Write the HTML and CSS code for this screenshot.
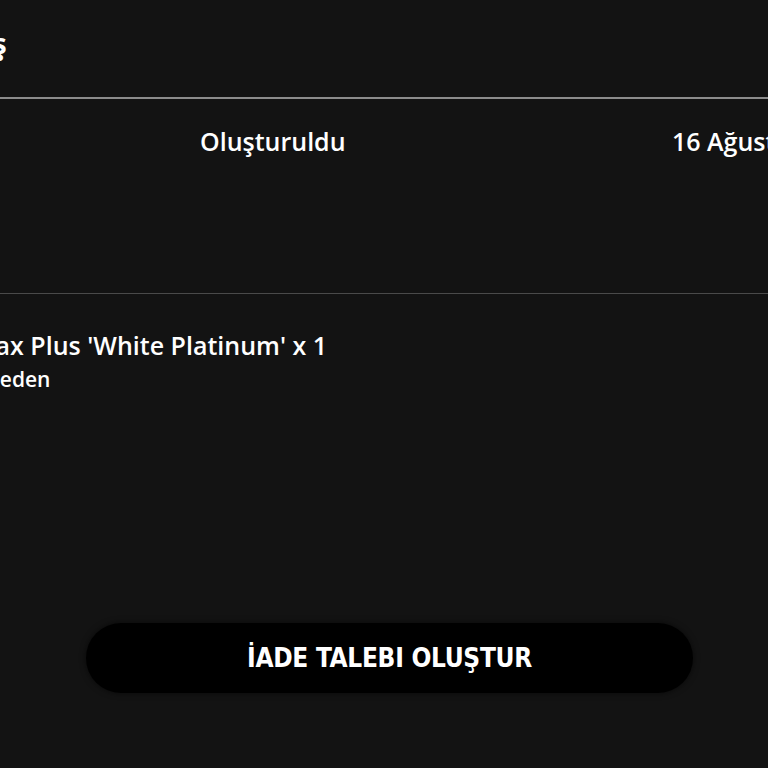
FILE: index.html
```html
<!DOCTYPE html>
<html lang="tr">
<head>
  <meta charset="UTF-8" />
  <meta name="viewport" content="width=device-width, initial-scale=1.0"/>
  <title>Sipariş Detayı</title>
  <link rel="stylesheet" href="styles.css">
</head>
<body>
  <div class="sayfa">
    <header class="baslik">
      <h1>Sipariş</h1>
    </header>

    <section class="durum">
      <span class="durum-etiket">Durum</span>
      <span class="durum-deger">Oluşturuldu</span>
      <span class="durum-tarih">16 Ağustos 2024</span>
    </section>

    <section class="urun">
      <div class="urun-bilgi">
        <p class="urun-ad">Nike Air Max Plus 'White Platinum' x 1</p>
        <p class="urun-beden">Beden</p>
      </div>
    </section>

    <div class="aksiyon">
      <button class="iade-btn">İADE TALEBI OLUŞTUR</button>
    </div>
  </div>
</body>
</html>
```

FILE: styles.css
```css
html, body {
  margin: 0;
  padding: 0;
  background-color: #131313;
  overflow: hidden;
}
body {
  font-family: 'Open Sans', 'DejaVu Sans', sans-serif;
  color: #fff;
  width: 768px;
  height: 768px;
}
.sayfa {
  display: flex;
  flex-direction: column;
}
.baslik {
  height: 97px;
  border-bottom: 2px solid #8c8c8c;
  display: flex;
  align-items: flex-start;
}
.baslik h1 {
  margin: 24px 0 0 -87px;
  font-size: 28px;
  font-weight: 700;
  white-space: nowrap;
}
.durum {
  height: 195px;
  border-bottom: 1px solid #4a4a4a;
  display: grid;
  grid-template-columns: 200px 472px auto;
  align-items: start;
  padding-top: 25px;
  box-sizing: border-box;
  font-size: 25px;
  font-weight: 600;
  white-space: nowrap;
}
.durum-etiket {
  visibility: hidden;
}
.urun {
  padding-top: 34px;
  display: flex;
}
.urun-bilgi {
  margin-left: -130px;
  white-space: nowrap;
}
.urun-ad {
  margin: 0;
  font-size: 25px;
  font-weight: 600;
}
.urun-beden {
  margin: 3px 0 0 116px;
  font-size: 21px;
  font-weight: 600;
}
.aksiyon {
  padding: 0 0 0 86px;
  margin-top: 230px;
}
.iade-btn {
  width: 607px;
  height: 70px;
  border: none;
  border-radius: 35px;
  background-color: #000;
  color: #fff;
  font-family: 'DejaVu Sans Condensed', 'DejaVu Sans', sans-serif;
  font-stretch: condensed;
  font-weight: 700;
  font-size: 26px;
  letter-spacing: -0.3px;
  box-shadow: 0 0 6px rgba(0,0,0,0.6);
  cursor: pointer;
}
```
